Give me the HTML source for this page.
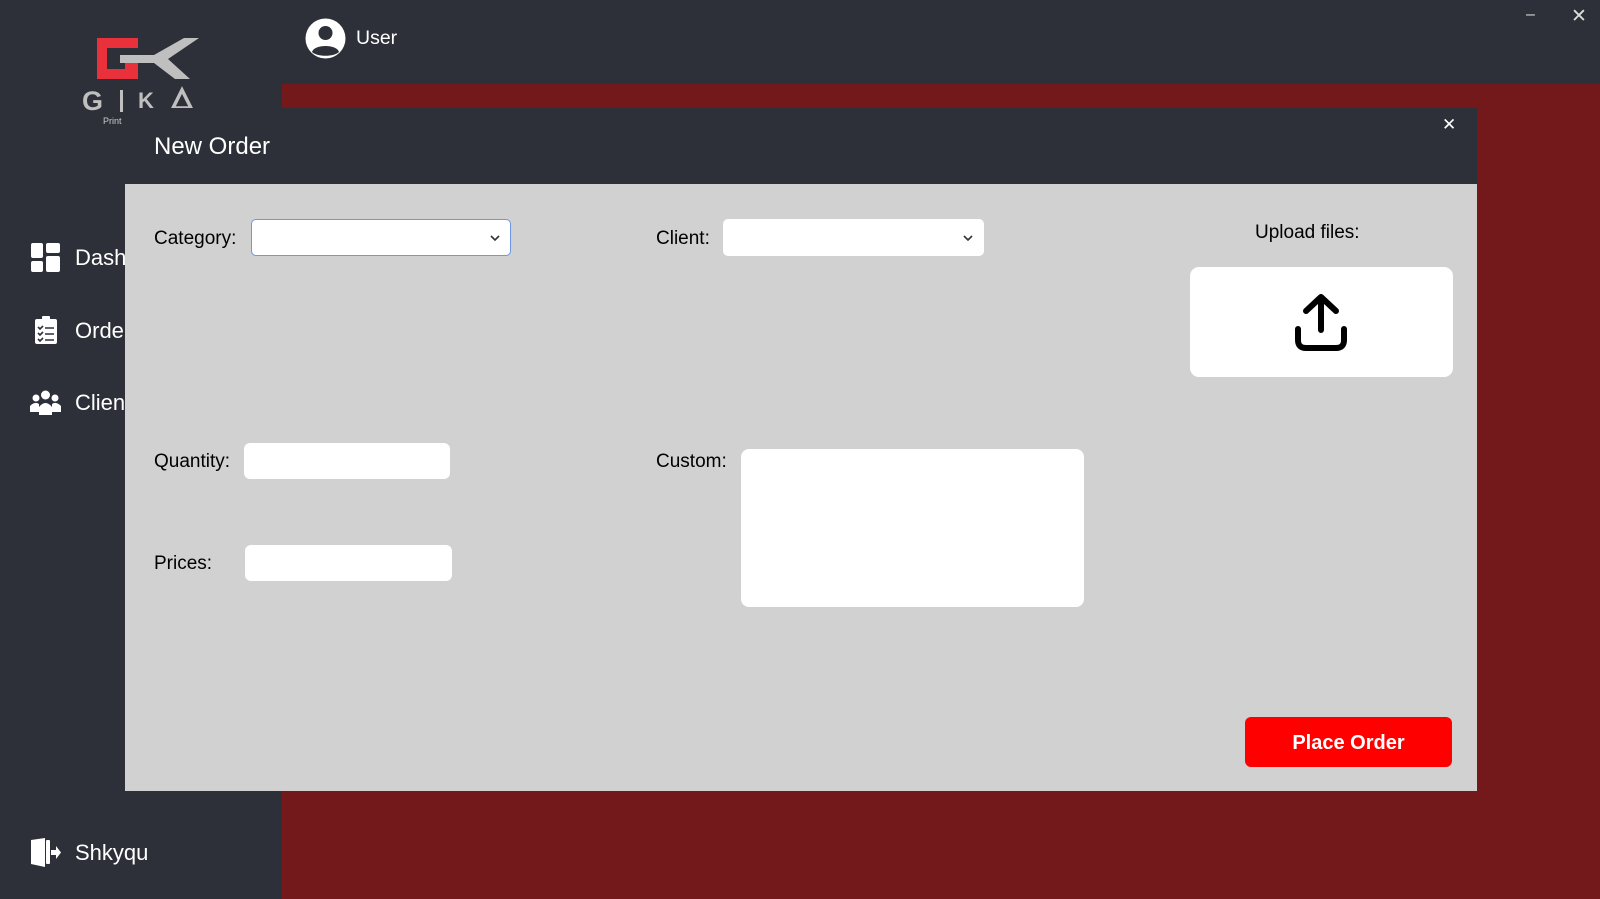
<!DOCTYPE html>
<html><head><meta charset="utf-8"><style>
*{box-sizing:border-box;margin:0;padding:0}
body{width:1600px;height:899px;overflow:hidden;background:#2d3038;font-family:"Liberation Sans",Arial,sans-serif;position:relative}
.abs{position:absolute}
.red{left:282px;top:84px;width:1318px;height:815px;background:#73191b}
.side{color:#fff;font-size:22px}
.dlg{left:125px;top:108px;width:1352px;height:683px;background:#d1d1d1}
.hdr{left:0;top:0;width:1352px;height:76px;background:#2d3038}
.lbl{font-size:19px;color:#000}
.box{background:#fff;border-radius:6px}
</style></head><body>
<div class="abs red"></div>
<!-- logo -->
<svg class="abs" style="left:80px;top:34px" width="120" height="95" viewBox="0 0 120 95">
<path d="M17 4 H58 V14 H27 V35 H45 V27 H58 V45 H17 Z" fill="#e8313a"/>
<path d="M40 21 H74 L104 4 H119 L88 25 L110 45 H95 L74 29 H40 Z" fill="#bfbfbf"/>
<text x="2" y="76" font-family="Liberation Sans" font-size="27" fill="#bfbfbf" font-weight="bold">G</text>
<rect x="40" y="56" width="3" height="22" fill="#bfbfbf"/>
<text x="58" y="74" font-family="Liberation Sans" font-size="22" fill="#bfbfbf" font-weight="bold">K</text>
<path d="M93 74 L102 56 L111 74 Z" fill="none" stroke="#bfbfbf" stroke-width="3.5"/>
<text x="23" y="90" font-family="Liberation Sans" font-size="9" fill="#ccc">Print</text>
</svg>
<!-- user -->
<svg class="abs" style="left:304px;top:17px" width="43" height="43" viewBox="0 0 43 43">
<circle cx="21.5" cy="21.5" r="20" fill="#fff"/>
<circle cx="21.5" cy="16" r="7" fill="#2d3038"/>
<path d="M8 35 C10 27 33 27 35 35 C30 40 13 40 8 35Z" fill="#2d3038"/>
</svg>
<div class="abs" style="left:356px;top:27px;color:#fff;font-size:19.5px">User</div>
<div class="abs" style="left:1526px;top:6px;color:#ddd;font-size:16px">–</div>
<div class="abs" style="left:1571px;top:5px;color:#ddd;font-size:19px">✕</div>
<!-- sidebar -->
<svg class="abs" style="left:31px;top:243px" width="29" height="29" viewBox="0 0 29 29" fill="#fff"><rect x="0" y="0" width="12" height="15" rx="2"/><rect x="15" y="0" width="14" height="10" rx="2"/><rect x="0" y="18" width="12" height="11" rx="2"/><rect x="15" y="13" width="14" height="16" rx="2"/></svg>
<div class="abs side" style="left:75px;top:245px">Dash</div>
<svg class="abs" style="left:35px;top:316px" width="22" height="28" viewBox="0 0 22 28"><rect x="0" y="3" width="22" height="25" rx="2" fill="#fff"/><rect x="7" y="0" width="8" height="5" rx="1" fill="#fff"/><g stroke="#2d3038" stroke-width="1.6" fill="none"><path d="M3 11l2 2 3-3M3 17l2 2 3-3M3 23l2 2 3-3M10 12h9M10 18h9M10 24h9"/></g></svg>
<div class="abs side" style="left:75px;top:318px">Orde</div>
<svg class="abs" style="left:30px;top:390px" width="31" height="25" viewBox="0 0 31 25" fill="#fff"><circle cx="15.5" cy="5" r="4.5"/><circle cx="6" cy="8" r="3.5"/><circle cx="25" cy="8" r="3.5"/><path d="M9 25 V17 Q15.5 9 22 17 V25Z"/><path d="M0 22 V16 Q5 11 9 14 V22Z"/><path d="M31 22 V16 Q26 11 22 14 V22Z"/></svg>
<div class="abs side" style="left:75px;top:390px">Clien</div>
<svg class="abs" style="left:31px;top:838px" width="30" height="29" viewBox="0 0 30 29" fill="#fff"><path d="M0 2 L14 0 V29 L0 26Z"/><rect x="15" y="2" width="4" height="24" rx="1"/><path d="M20 12 H25 V8 L30 14.5 L25 21 V17 H20Z"/></svg>
<div class="abs side" style="left:75px;top:840px">Shkyqu</div>
<!-- dialog -->
<div class="abs dlg">
 <div class="abs hdr"></div>
 <div class="abs" style="left:29px;top:25px;color:#fff;font-size:24px">New Order</div>
 <div class="abs" style="left:1317px;top:7px;color:#fff;font-size:17px">✕</div>
 <div class="abs lbl" style="left:29px;top:120px">Category:</div>
 <div class="abs box" style="left:126px;top:111px;width:260px;height:37px;border:1px solid #6f96e6;border-radius:5px"></div>
 <svg class="abs" style="left:365px;top:127px" width="10" height="7"><path d="M1 1l4 4 4-4" stroke="#333" stroke-width="1.6" fill="none"/></svg>
 <div class="abs lbl" style="left:531px;top:120px">Client:</div>
 <div class="abs box" style="left:598px;top:111px;width:261px;height:37px;border-radius:5px"></div>
 <svg class="abs" style="left:838px;top:127px" width="10" height="7"><path d="M1 1l4 4 4-4" stroke="#333" stroke-width="1.6" fill="none"/></svg>
 <div class="abs lbl" style="left:1130px;top:114px">Upload files:</div>
 <div class="abs box" style="left:1065px;top:159px;width:263px;height:110px;border-radius:9px"></div>
 <svg class="abs" style="left:1168px;top:184px" width="56" height="62" viewBox="0 0 56 62" fill="none" stroke="#000" stroke-width="6" stroke-linecap="round" stroke-linejoin="round"><path d="M28 38 V5 M13 19 L28 5 L43 19"/><path d="M5 37 V48 Q5 56 13 56 H43 Q51 56 51 48 V37"/></svg>
 <div class="abs lbl" style="left:29px;top:343px">Quantity:</div>
 <div class="abs box" style="left:119px;top:335px;width:206px;height:36px"></div>
 <div class="abs lbl" style="left:29px;top:445px">Prices:</div>
 <div class="abs box" style="left:120px;top:437px;width:207px;height:36px"></div>
 <div class="abs lbl" style="left:531px;top:343px">Custom:</div>
 <div class="abs box" style="left:616px;top:341px;width:343px;height:158px;border-radius:8px"></div>
 <div class="abs" style="left:1120px;top:609px;width:207px;height:50px;background:#ff0000;border-radius:6px;color:#fff;font-weight:bold;font-size:20px;text-align:center;line-height:52px">Place Order</div>
</div>
</body></html>
